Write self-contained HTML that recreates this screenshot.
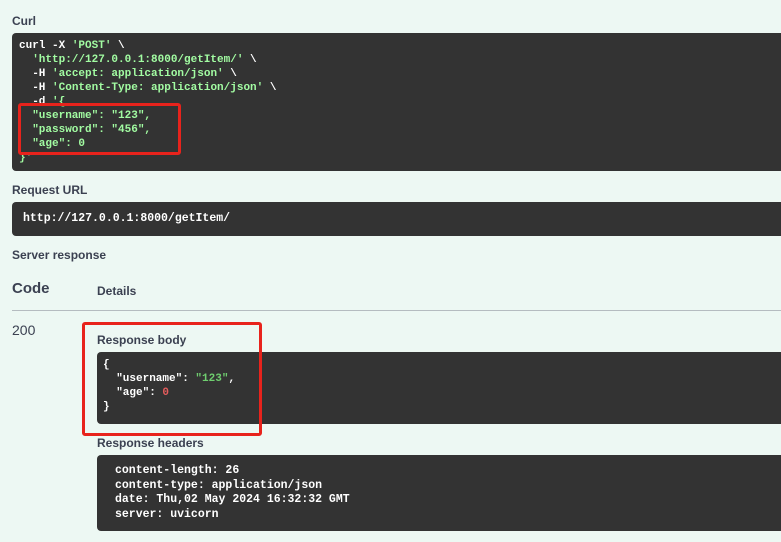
<!DOCTYPE html>
<html><head><style>
body{margin:0;width:781px;height:542px;background:#edf8f3;font-family:"Liberation Sans",sans-serif;color:#3b4151;position:relative;overflow:hidden}
.a{position:absolute}
.lbl{font-size:12px;font-weight:bold}
.box{background:#333;border-radius:4px;position:absolute}
pre{margin:0;font-family:"Liberation Mono",monospace;font-size:11px;font-weight:bold;line-height:14px;color:#fff;white-space:pre}
.g{color:#a2fca2}
.s{color:#6fce6f}
.r{color:#e65d5d}
.red{position:absolute;border:3px solid #e8231c;border-radius:3px}
</style></head><body>
<div class="a lbl" style="left:12px;top:14px">Curl</div>
<div class="box" style="left:12px;top:33px;width:790px;height:138px"><pre style="position:absolute;left:7px;top:6px">curl -X <span class="g">'POST'</span> \
  <span class="g">'http://127.0.0.1:8000/getItem/'</span> \
  -H <span class="g">'accept: application/json'</span> \
  -H <span class="g">'Content-Type: application/json'</span> \
  -d <span class="g">'{</span>
<span class="g">  "username": "123",
  "password": "456",
  "age": 0
}'</span></pre></div>
<div class="red" style="left:18px;top:103px;width:157px;height:46px"></div>
<div class="a lbl" style="left:12px;top:183px">Request URL</div>
<div class="box" style="left:12px;top:202px;width:790px;height:34px"><pre style="position:absolute;left:11px;top:10px;font-size:11.5px">http://127.0.0.1:8000/getItem/</pre></div>
<div class="a lbl" style="left:12px;top:248px">Server response</div>
<div class="a" style="left:12px;top:280px;font-size:15px;font-weight:bold">Code</div>
<div class="a lbl" style="left:97px;top:284px">Details</div>
<div class="a" style="left:12px;top:310px;width:770px;height:1px;background:#b5bcc0"></div>
<div class="a" style="left:12px;top:322px;font-size:14px">200</div>
<div class="a lbl" style="left:97px;top:333px">Response body</div>
<div class="box" style="left:97px;top:352px;width:700px;height:72px"><pre style="position:absolute;left:6px;top:6px">{
  "username": <span class="s">"123"</span>,
  "age": <span class="r">0</span>
}</pre></div>
<div class="red" style="left:82px;top:322px;width:174px;height:108px"></div>
<div class="a lbl" style="left:97px;top:436px">Response headers</div>
<div class="box" style="left:97px;top:455px;width:700px;height:76px"><pre style="position:absolute;left:18px;top:9px;font-size:11.5px;line-height:14.5px">content-length: 26
content-type: application/json
date: Thu,02 May 2024 16:32:32 GMT
server: uvicorn</pre></div>
</body></html>
